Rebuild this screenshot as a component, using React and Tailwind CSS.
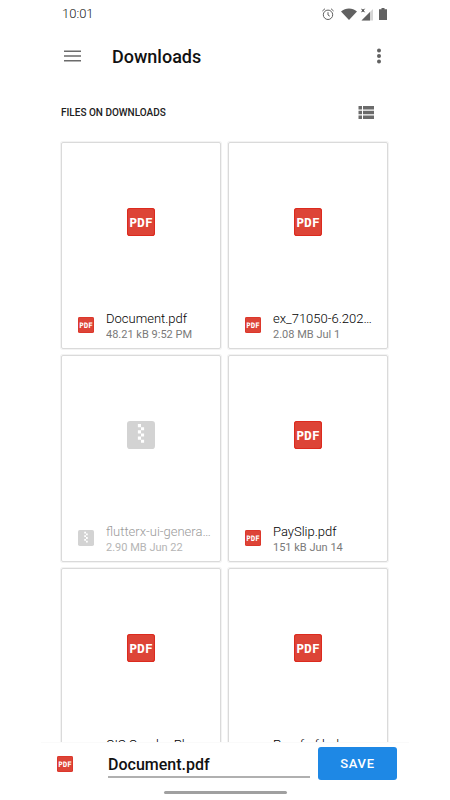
import React, { useState } from 'react';

const files = [
  { id: 1, name: 'Document.pdf', size: '48.21 kB', date: '9:52 PM', type: 'pdf' },
  { id: 2, name: 'ex_71050-6.202…', size: '2.08 MB', date: 'Jul 1', type: 'pdf' },
  { id: 3, name: 'flutterx-ui-genera…', size: '2.90 MB', date: 'Jun 22', type: 'zip' },
  { id: 4, name: 'PaySlip.pdf', size: '151 kB', date: 'Jun 14', type: 'pdf' },
  { id: 5, name: 'CIS Combo Plus', size: '', date: '', type: 'pdf' },
  { id: 6, name: 'Proof of balance', size: '', date: '', type: 'pdf' },
];

const PdfIcon = ({ className }) => (
  <svg viewBox="0 0 27 27" className={className} aria-hidden="true">
    <rect width="27" height="27" rx="3" fill="#dd4437" />
    <rect x="0.5" y="0.5" width="26" height="26" rx="2.5" fill="none" stroke="#dc2a1e" />
    <text x="13.5" y="18" textAnchor="middle" fontFamily="DejaVu Sans Mono, monospace" fontWeight="700" fontSize="12.5" fill="#fff">PDF</text>
  </svg>
);

const ZipIcon = ({ className }) => (
  <svg viewBox="0 0 27 27" className={className} aria-hidden="true">
    <rect width="27" height="27" rx="3" fill="#d3d3d3" />
    <path
      d="M10.5 3h3v3h-3zM13.5 6h3v3h-3zM10.5 9h3v3h-3zM13.5 12h3v3h-3zM10.5 15h3v3h-3zM13.5 18h3v3h-3z"
      fill="#fff"
    />
  </svg>
);

const StatusIcons = () => (
  <div className="flex items-center text-[#616161]">
    <svg viewBox="0 0 12 12" className="w-3 h-3" fill="none" stroke="currentColor">
      <circle cx="6" cy="6.8" r="4.7" />
      <path d="M6 4.2v2.8l1.8 1.2M0.4 3L3 0.7M11.6 3L9 0.7" />
    </svg>
    <svg viewBox="0 0 16 12" className="w-4 h-3 ml-[7px]" fill="currentColor">
      <path d="M0 3.4C4.6-.5 11.4-.5 16 3.4L8 12z" />
    </svg>
    <svg viewBox="0 0 12 13" className="w-3 h-[13px] ml-1">
      <path d="M12 1v11.5H0.5z" fill="#d6d6d6" />
      <path d="M9 4v8.5H0.5z" fill="currentColor" />
      <path d="M0.5 0.8l3 3.4M3.5 0.8l-3 3.4" stroke="#222" />
    </svg>
    <svg viewBox="0 0 8 12" className="w-2 h-3 ml-[6px]" fill="currentColor">
      <path d="M2.5 0h3v1.2H8V12H0V1.2h2.5z" />
    </svg>
  </div>
);

const FileCard = ({ file }) => {
  const disabled = file.type !== 'pdf';
  const Icon = file.type === 'pdf' ? PdfIcon : ZipIcon;

  return (
    <button
      type="button"
      disabled={disabled}
      className="flex flex-col min-w-0 border border-[#dadada] rounded-[2px] shadow-[0_0_0_1px_#f3f3f3] text-left"
    >
      <span className="w-full h-[158px] flex items-center justify-center">
        <Icon className="w-7 h-7" />
      </span>
      <span className="w-full h-[47px] flex items-start gap-3 pl-4">
        <Icon className="w-4 h-4 mt-4 shrink-0" />
        <span className="min-w-0 flex-1 flex flex-col mt-[10px]">
          <span className={`truncate text-[13px] font-light leading-4 ${disabled ? 'text-[#9a9a9a]' : 'text-black'}`}>
            {file.name}
          </span>
          <span className={`truncate text-[11px] leading-4 ${disabled ? 'text-[#b5b5b5]' : 'text-[#7a7a7a]'}`}>
            {file.size} {file.date}
          </span>
        </span>
      </span>
    </button>
  );
};

const App = () => {
  const [fileName, setFileName] = useState('Document.pdf');

  return (
    <div className="h-screen bg-white px-[41px] font-[Roboto,sans-serif]">
      <div className="h-full flex flex-col">
        <div className="h-7 shrink-0 flex items-center justify-between pl-[21px] pr-[22px]">
          <span className="text-[13px] font-light text-[#222]">10:01</span>
          <StatusIcons />
        </div>

        <header className="h-14 shrink-0 flex items-center pl-[23px] pr-6">
          <button type="button" aria-label="Menu" className="text-[#6b6b6b]">
            <svg viewBox="0 0 17 12" className="w-[17px] h-3" fill="currentColor">
              <path d="M0 0.5h17v1.5H0zM0 5.3h17v1.5H0zM0 10h17v1.5H0z" />
            </svg>
          </button>
          <h1 className="ml-[31px] pt-[2px] flex-1 text-lg font-medium text-[#111]">Downloads</h1>
          <button type="button" aria-label="More options" className="w-3 flex justify-center text-[#616161]">
            <svg viewBox="0 0 4 16" className="w-1 h-4" fill="currentColor">
              <circle cx="2" cy="2.5" r="2" />
              <circle cx="2" cy="8" r="2" />
              <circle cx="2" cy="13.5" r="2" />
            </svg>
          </button>
        </header>

        <main className="flex-1 min-h-0 overflow-hidden pl-5 pr-[21px]">
          <div className="h-[58px] pb-[2px] flex items-center justify-between pr-[14px]">
            <h2 className="text-[10px] font-medium text-[#212121]">FILES ON DOWNLOADS</h2>
            <button type="button" aria-label="List view" className="text-[#6b6b6b]">
              <svg viewBox="0 0 16 13" className="w-4 h-[13px]" fill="currentColor">
                <path d="M0.5 0H4v3.5H0.5zM5 0h11v3.5H5zM0.5 4.7H4v3.5H0.5zM5 4.7h11v3.5H5zM0.5 9.5H4V13H0.5zM5 9.5h11V13H5z" />
              </svg>
            </button>
          </div>
          <div className="grid grid-cols-2 gap-x-[7px] gap-y-[6px]">
            {files.map((file) => (
              <FileCard key={file.id} file={file} />
            ))}
          </div>
        </main>

        <footer className="shrink-0 h-[58px] bg-white border-t border-[#fafafa]">
          <form className="flex items-center pt-1 pl-4 pr-3" onSubmit={(e) => e.preventDefault()}>
            <PdfIcon className="w-4 h-4 shrink-0" />
            <input
              type="text"
              aria-label="File name"
              value={fileName}
              onChange={(e) => setFileName(e.target.value)}
              className="ml-[35px] pt-[3px] min-w-0 flex-1 h-7 border-b-2 border-[#b0b0b0] text-base font-medium text-[#111] outline-none"
            />
            <button
              type="submit"
              className="ml-2 w-[79px] h-[33px] rounded-[3px] bg-[#1e88e5] text-[13px] font-medium tracking-wider text-white"
            >
              SAVE
            </button>
          </form>
          <div className="mx-auto mt-[11px] w-[123px] h-[3px] rounded-full bg-[#a0a0a0]" />
        </footer>
      </div>
    </div>
  );
};

export default App;
